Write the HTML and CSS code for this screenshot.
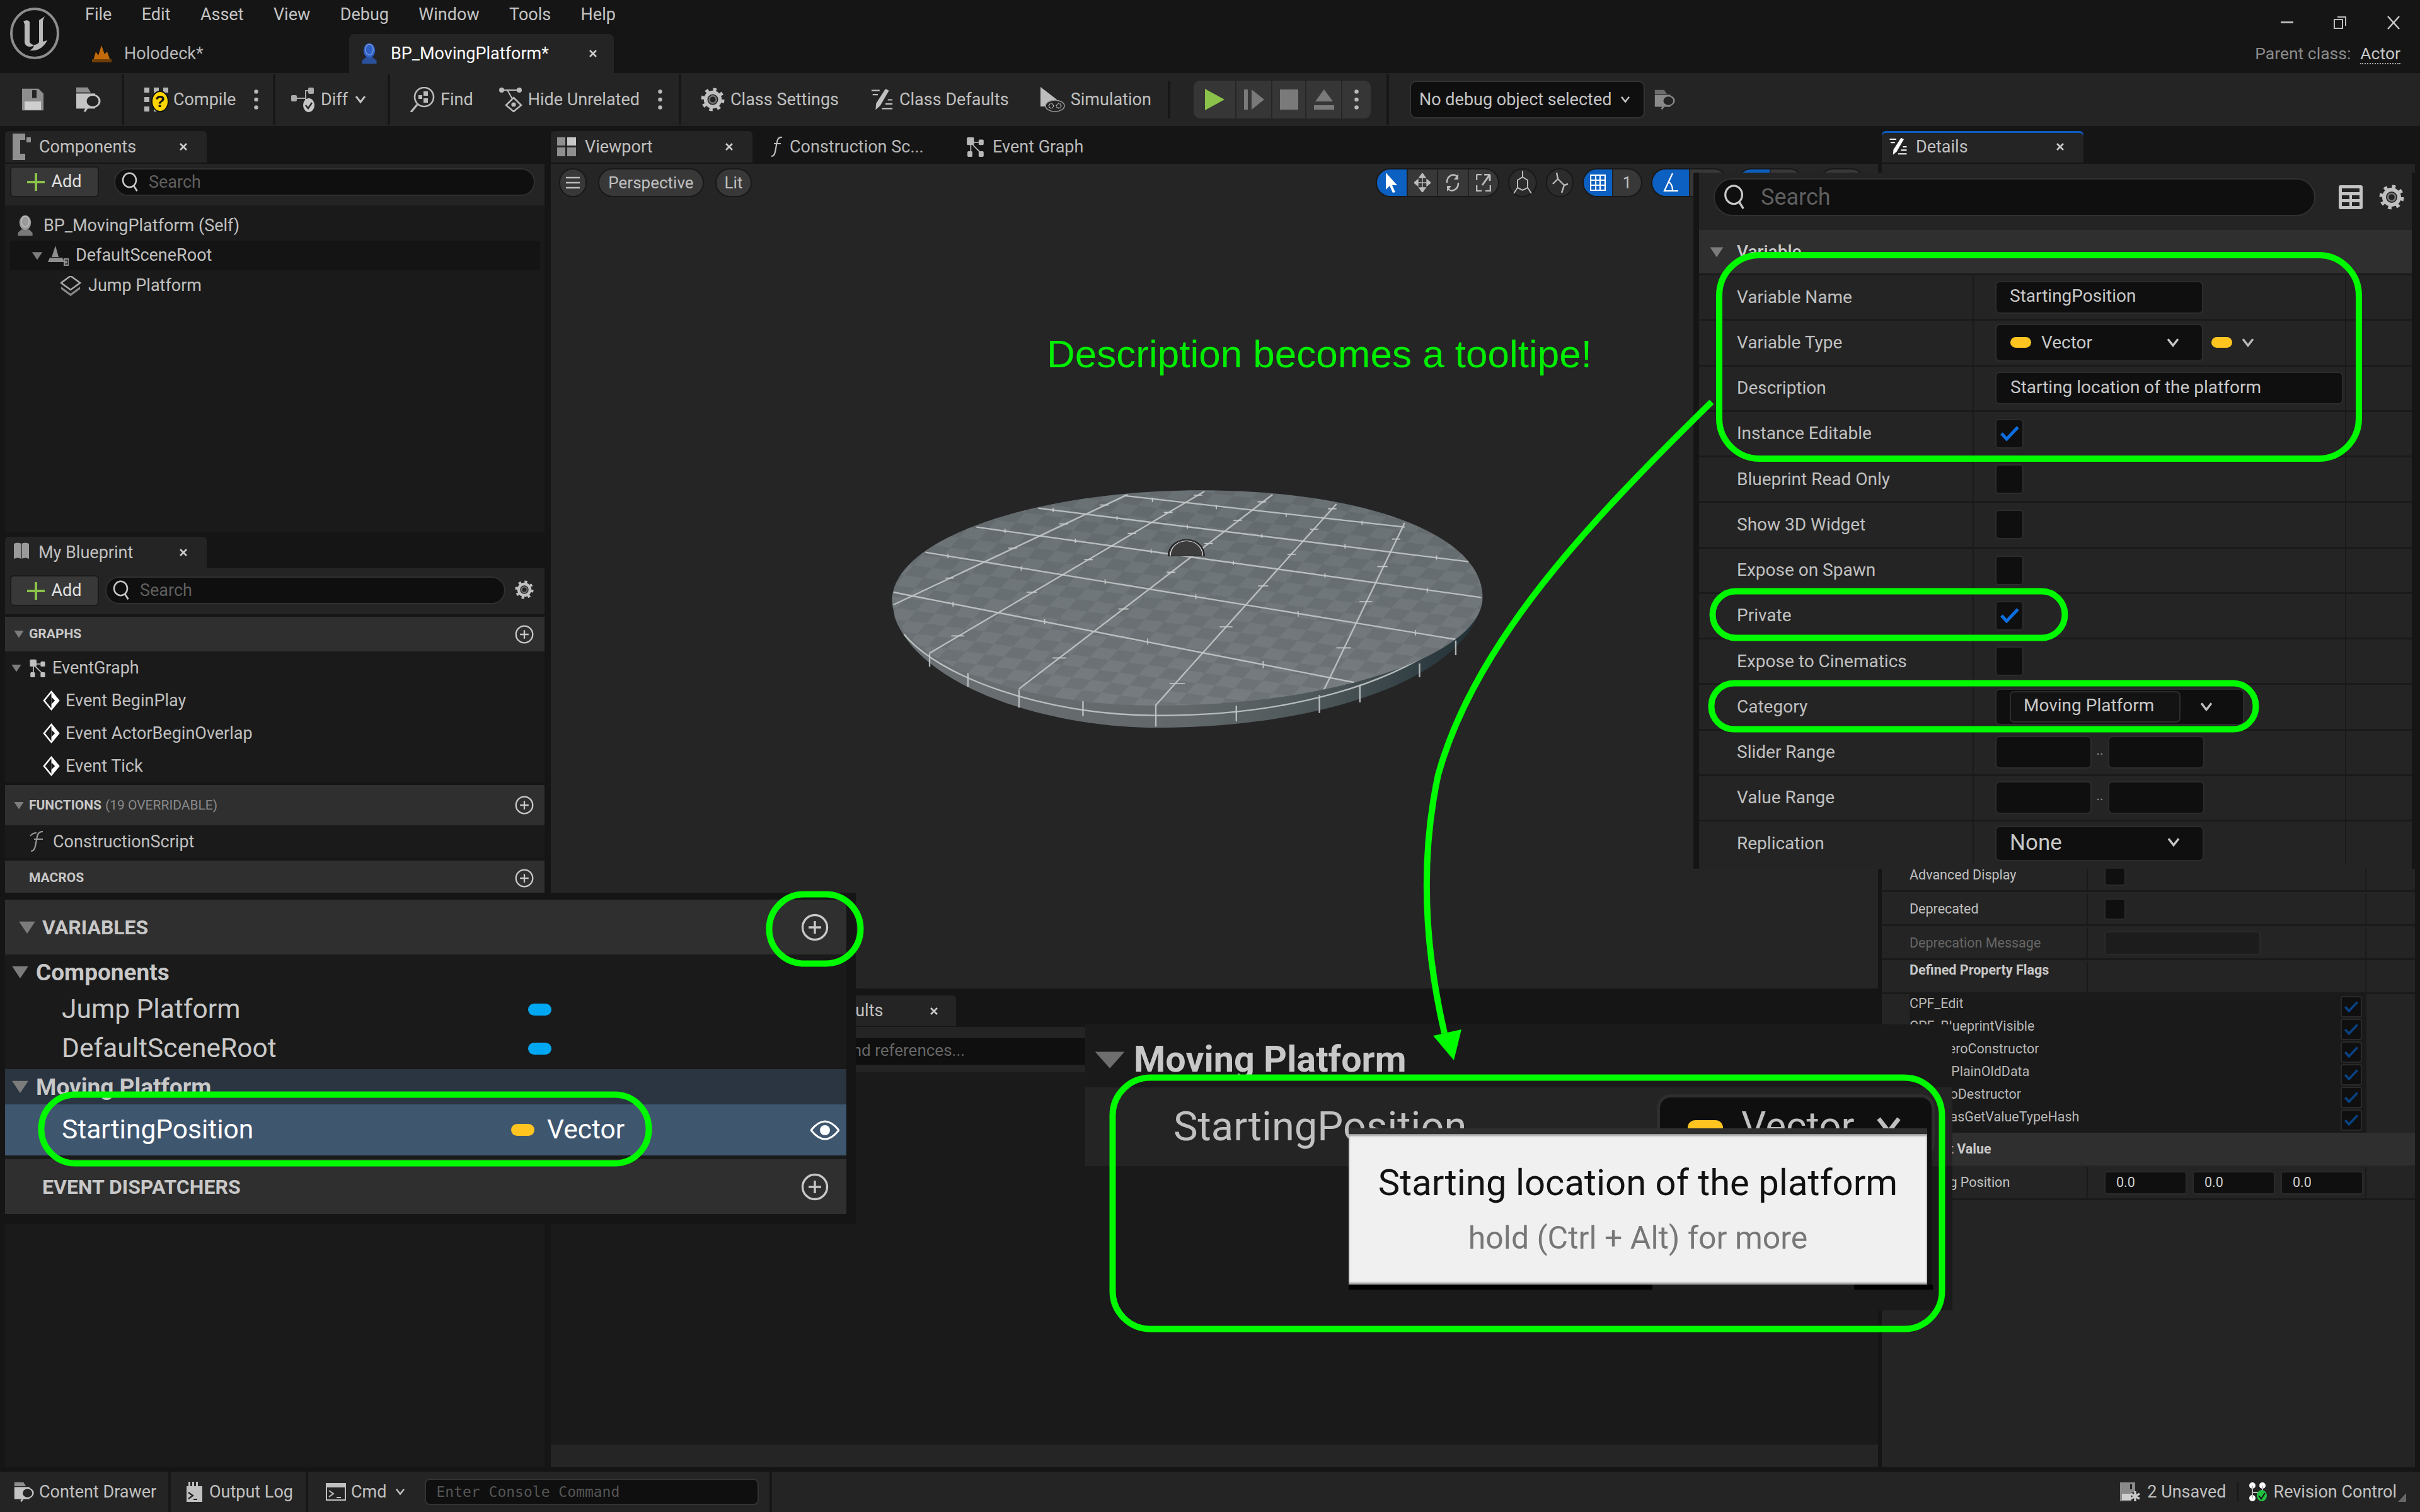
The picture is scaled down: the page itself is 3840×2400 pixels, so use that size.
FILE: index.html
```html
<!DOCTYPE html>
<html lang="en">
<head>
<meta charset="utf-8">
<title>BP_MovingPlatform</title>
<link rel="stylesheet" href="styles.css">
</head>
<body>
<svg class="defs" width="0" height="0" aria-hidden="true">
  <defs>
    <symbol id="x" viewBox="0 0 14 14"><path d="M2 2l10 10M12 2L2 12" fill="none" stroke="currentColor" stroke-width="2.6"/></symbol>
    <symbol id="chev" viewBox="0 0 20 14"><path d="M3 2l7 9 7-9" fill="none" stroke="currentColor" stroke-width="3"/></symbol>
    <symbol id="tri" viewBox="0 0 30 24"><path d="M1 2h28L15 23z" fill="currentColor"/></symbol>
    <symbol id="mag" viewBox="0 0 40 44"><ellipse cx="18" cy="18" rx="14" ry="15" fill="none" stroke="currentColor" stroke-width="3.4"/><path d="M27 30l7 11" stroke="currentColor" stroke-width="3.6"/></symbol>
    <symbol id="gear" viewBox="0 0 40 40"><circle cx="20" cy="20" r="12" fill="none" stroke="currentColor" stroke-width="6"/><circle cx="20" cy="20" r="16.5" fill="none" stroke="currentColor" stroke-width="6" stroke-dasharray="5.5 7.46"/><circle cx="20" cy="20" r="6" fill="none" stroke="#777" stroke-width="2.5"/></symbol>
    <symbol id="plusc" viewBox="0 0 44 44"><circle cx="22" cy="22" r="19.5" fill="none" stroke="currentColor" stroke-width="3.4"/><path d="M22 12v20M12 22h20" stroke="currentColor" stroke-width="3.4"/></symbol>
    <symbol id="check" viewBox="0 0 32 24"><path d="M3 12l8 9L29 2" fill="none" stroke="currentColor" stroke-width="5"/></symbol>
    <symbol id="kebab" viewBox="0 0 10 40"><circle cx="5" cy="6" r="3.6" fill="currentColor"/><circle cx="5" cy="20" r="3.6" fill="currentColor"/><circle cx="5" cy="34" r="3.6" fill="currentColor"/></symbol>
    <symbol id="event" viewBox="0 0 30 36"><path d="M15 1l14 17-14 17L1 18z" fill="#fff"/><path d="M15 5v26L4.5 18z" fill="#1a1a1a"/><path d="M15 12l6 6-6 6z" fill="#1a1a1a"/></symbol>
    <symbol id="graph" viewBox="0 0 32 36"><rect x="1" y="1" width="13" height="14" rx="2" fill="currentColor"/><rect x="22" y="5" width="9" height="10" rx="2" fill="currentColor"/><rect x="2" y="26" width="9" height="10" rx="2" fill="currentColor"/><rect x="22" y="26" width="9" height="10" rx="2" fill="currentColor"/><path d="M8 15v12M12 10h10M12 15l12 12" stroke="currentColor" stroke-width="2"/></symbol>
    <symbol id="pencil" viewBox="0 0 40 40"><path d="M26 1l6 3-15 26-8 7 1-11z" fill="currentColor"/><path d="M2 4h14M4 11h9M30 20h8M26 27h12M20 35h18" stroke="currentColor" stroke-width="2.4"/></symbol>
    <symbol id="bpicon" viewBox="0 0 34 44"><ellipse cx="17" cy="16" rx="12" ry="15" fill="currentColor"/><ellipse cx="17" cy="14" rx="8" ry="11" fill="none" stroke="#fff" stroke-opacity=".35" stroke-width="2"/><path d="M9 30h16l7 7v6H2v-6z" fill="currentColor" fill-opacity=".75"/></symbol>
    <symbol id="floppy" viewBox="0 0 36 46"><path d="M1 1h26l8 10v34H1z" fill="#8e8e8e"/><rect x="17" y="4" width="7" height="16" fill="#232323"/><rect x="5" y="27" width="26" height="17" fill="#cfcfcf"/></symbol>
    <symbol id="browse" viewBox="0 0 40 50"><path d="M1 1h18l5 10H1z" fill="#8e8e8e"/><path d="M1 13h30v30H1z" fill="#c4c4c4"/><ellipse cx="27" cy="28" rx="11" ry="12" fill="#242424" stroke="#c4c4c4" stroke-width="3"/><path d="M20 38l-6 11" stroke="#c4c4c4" stroke-width="3.4"/></symbol>
  </defs>
</svg>

<div class="app">
  <header class="titlebar">
    <svg class="logo" width="81" height="83" viewBox="0 0 81 83"><ellipse cx="40" cy="41" rx="37" ry="39" fill="#141414" stroke="#8d8d8d" stroke-width="4"/><path d="M22 22c5-3 9-2 10 1v32c4 6 12 5 15 0V20l9-6c-2 4-3 6-3 10v30l7-2c-5 10-14 18-28 16 4-2 6-4 7-8-7 4-14 2-15-5V27c-1-3-1-4-2-5z" fill="#b9b9b9"/></svg>
    <div class="title-main">
      <nav class="menu">
        <span>File</span><span>Edit</span><span>Asset</span><span>View</span><span>Debug</span><span>Window</span><span>Tools</span><span>Help</span>
      </nav>
      <div class="doc-tabs">
        <div class="doc-tab">
          <svg width="33" height="27" viewBox="0 0 33 27"><path d="M16 0l5 14 4-4 5 14H3l4-14 4 6z" fill="#c26a0a"/><rect x="1" y="22" width="31" height="5" fill="#6f3e06"/></svg>
          <span>Holodeck*</span>
        </div>
        <div class="doc-tab doc-tab-active">
          <svg class="ic-blue" width="32" height="34" viewBox="0 0 34 44"><use href="#bpicon"/></svg>
          <span>BP_MovingPlatform*</span>
          <svg class="close" width="14" height="14"><use href="#x"/></svg>
        </div>
      </div>
    </div>
    <div class="title-right">
      <div class="win-ctrl">
        <svg width="20" height="4" viewBox="0 0 20 4"><rect width="20" height="3" fill="#bbb"/></svg>
        <svg width="20" height="20" viewBox="0 0 20 20"><path d="M6 1h13v14M1 5h13v14H1z" fill="none" stroke="#bbb" stroke-width="2"/></svg>
        <svg width="22" height="22" viewBox="0 0 22 22"><path d="M2 1l18 20M20 1L2 21" stroke="#ccc" stroke-width="2.4"/></svg>
      </div>
      <div class="parent-class"><span class="pc-label">Parent class:</span> <span class="pc-value">Actor</span></div>
    </div>
  </header>

  <section class="toolbar">
    <div class="tsec tsec-1">
      <svg width="36" height="36" viewBox="0 0 36 46" preserveAspectRatio="none"><use href="#floppy"/></svg>
      <svg class="ml-50" width="40" height="40" viewBox="0 0 40 50" preserveAspectRatio="none"><use href="#browse"/></svg>
    </div>
    <div class="tsec tsec-2">
      <span class="tbtn tbtn-tight">
        <svg width="40" height="40" viewBox="0 0 40 40"><path d="M1 1h8v8H1zM16 1h8v8h-8zM1 16h8v8H1zM1 31h8v8H1zM16 31h8v8h-8zM31 1h8v8h-8z" fill="#b5b5b5"/><ellipse cx="26" cy="23" rx="13" ry="16" fill="#ffd500" stroke="#111" stroke-width="2"/><text x="26" y="32" class="ic-q">?</text></svg>
        Compile
      </span>
      <svg class="kebab" width="9" height="36" viewBox="0 0 10 40"><use href="#kebab"/></svg>
    </div>
    <div class="tsec tsec-3">
      <span class="tbtn">
        <svg width="39" height="40" viewBox="0 0 39 40"><rect x="1" y="13" width="9" height="10" rx="2" fill="#aaa"/><rect x="28" y="1" width="9" height="10" rx="2" fill="#aaa"/><path d="M10 18h14V6h4M24 18v8" fill="none" stroke="#aaa" stroke-width="2"/><ellipse cx="29" cy="29" rx="9" ry="11" fill="#c6c6c6"/><path d="M24 29l4 5 6-9" fill="none" stroke="#242424" stroke-width="2.4"/></svg>
        Diff
        <svg class="chev" width="20" height="14"><use href="#chev"/></svg>
      </span>
    </div>
    <div class="tsec tsec-4">
      <span class="tbtn">
        <svg width="40" height="40" viewBox="0 0 40 40"><ellipse cx="23" cy="16" rx="15" ry="15" fill="none" stroke="#bbb" stroke-width="2.6"/><path d="M12 28L2 40" stroke="#bbb" stroke-width="3.4"/><rect x="22" y="7" width="7" height="7" fill="#bbb"/><rect x="22" y="18" width="7" height="7" fill="#bbb"/><rect x="14" y="13" width="6" height="6" fill="#bbb"/></svg>
        Find
      </span>
      <span class="tbtn ml-40">
        <svg width="38" height="40" viewBox="0 0 38 40"><circle cx="5" cy="5" r="4" fill="#bbb"/><circle cx="33" cy="5" r="4" fill="#bbb"/><path d="M8 5h22M14 5l8 14" stroke="#bbb" stroke-width="2"/><path d="M24 17l12 12-12 10-12-10z" fill="none" stroke="#bbb" stroke-width="2.6"/><circle cx="24" cy="28" r="3.6" fill="#bbb"/></svg>
        Hide Unrelated
      </span>
      <svg class="kebab" width="9" height="36" viewBox="0 0 10 40"><use href="#kebab"/></svg>
    </div>
    <div class="tsec tsec-5">
      <span class="tbtn">
        <svg width="38" height="38" viewBox="0 0 40 40"><use href="#gear"/></svg>
        Class Settings
      </span>
      <span class="tbtn ml-50">
        <svg width="37" height="37" viewBox="0 0 40 40"><use href="#pencil"/></svg>
        Class Defaults
      </span>
      <span class="tbtn ml-49">
        <svg width="40" height="40" viewBox="0 0 40 40"><path d="M1 0l26 20-14 11H1z" fill="#bdbdbd"/><ellipse cx="24" cy="30" rx="15" ry="9" fill="#242424" stroke="#999" stroke-width="1.6"/><circle cx="18" cy="30" r="3.6" fill="none" stroke="#bbb" stroke-width="1.6" stroke-dasharray="1.6 1"/><circle cx="30" cy="30" r="3.6" fill="none" stroke="#bbb" stroke-width="1.6" stroke-dasharray="1.6 1"/></svg>
        Simulation
      </span>
      <i class="tsep"></i>
    </div>
    <div class="tsec tsec-6">
      <div class="play-group">
        <span class="play-cell"><svg width="32" height="34" viewBox="0 0 32 34"><path d="M1 0l31 17L1 34z" fill="#8bc34a"/></svg></span>
        <span class="play-cell"><svg width="32" height="32" viewBox="0 0 32 32"><path d="M0 0h6v32H0zM12 0l20 16-20 16z" fill="#7a7a7a"/></svg></span>
        <span class="play-cell play-stop"><svg width="29" height="32" viewBox="0 0 29 32"><rect width="29" height="32" fill="#7a7a7a"/></svg></span>
        <span class="play-cell"><svg width="32" height="32" viewBox="0 0 32 32"><path d="M16 0l14 19H2zM0 25h32v7H0z" fill="#7a7a7a"/></svg></span>
        <span class="play-cell play-kebab"><svg width="9" height="36" viewBox="0 0 10 40"><use href="#kebab"/></svg></span>
      </div>
    </div>
    <div class="tsec tsec-7">
      <div class="debug-select">
        <span>No debug object selected</span>
        <svg width="18" height="12"><use href="#chev"/></svg>
      </div>
      <svg class="folder-find" width="33" height="32" viewBox="0 0 40 50" preserveAspectRatio="none"><path d="M1 1h18l5 10H1z" fill="#6d6d6d"/><path d="M1 13h30v30H1z" fill="#8a8a8a"/><ellipse cx="27" cy="28" rx="11" ry="12" fill="#242424" stroke="#8a8a8a" stroke-width="3"/><path d="M20 38l-6 11" stroke="#8a8a8a" stroke-width="3.4"/></svg>
    </div>
  </section>

  <main class="workspace">
    <div class="col col-left">
      <div class="tabstrip">
        <div class="tab tab-left">
          <svg width="29" height="42" viewBox="0 0 29 42"><path d="M0 0h29v6H22v8h7V0zM0 0h20v10h-8v22h8v10H0z" fill="#8f8f8f"/></svg>
          <span>Components</span>
          <svg class="close" width="14" height="14"><use href="#x"/></svg>
        </div>
      </div>
      <div class="comp-toolbar">
        <div class="add-btn"><span class="plus"></span><span>Add</span></div>
        <div class="searchbox searchbox-comp">
          <svg width="30" height="34" viewBox="0 0 40 44"><use href="#mag"/></svg>
          <span>Search</span>
        </div>
      </div>
      <div class="tree">
        <div class="tree-row tree-bp">
          <svg width="32" height="34" viewBox="0 0 34 44" class="ic-dim"><use href="#bpicon"/></svg>
          <span>BP_MovingPlatform (Self)</span>
        </div>
        <div class="tree-row tree-root">
          <svg class="ic-tri" width="20" height="14"><use href="#tri"/></svg>
          <svg width="33" height="32" viewBox="0 0 33 32"><path d="M12 0l5 18H6zM3 19h20l3 7H0zM25 20h8v12h-8z" fill="#8e8e8e"/><path d="M27 23h4v6h-4" fill="none" stroke="#222" stroke-width="1.4"/></svg>
          <span>DefaultSceneRoot</span>
        </div>
        <div class="tree-row tree-leaf">
          <svg width="33" height="32" viewBox="0 0 33 32"><path d="M16 0l15 11-15 11L1 11z" fill="none" stroke="#aaa" stroke-width="2.6"/><path d="M1 17l15 11 15-11v4L16 32 1 21z" fill="#888"/></svg>
          <span>Jump Platform</span>
        </div>
      </div>
      <div class="strip-gap"></div>
      <div class="tab tab-left">
        <svg width="28" height="32" viewBox="0 0 28 32"><path d="M2 2c4-2 8-2 12 0 4-2 8-2 12 0v24c-4-2-8-2-12 0-4-2-8-2-12 0z" fill="#9a9a9a"/><path d="M14 2v24" stroke="#333" stroke-width="1.5"/></svg>
        <span>My Blueprint</span>
        <svg class="close" width="14" height="14"><use href="#x"/></svg>
      </div>
      <div class="bp-toolbar">
        <div class="add-btn"><span class="plus"></span><span>Add</span></div>
        <div class="searchbox searchbox-bp">
          <svg width="30" height="34" viewBox="0 0 40 44"><use href="#mag"/></svg>
          <span>Search</span>
        </div>
        <svg class="bp-gear" width="30" height="30" viewBox="0 0 40 40"><use href="#gear"/></svg>
      </div>
      <div class="sec-head sec-graphs">
        <svg class="ic-tri-h" width="20" height="13"><use href="#tri"/></svg>
        <b>GRAPHS</b>
        <svg class="plusc" width="30" height="30" viewBox="0 0 44 44"><use href="#plusc"/></svg>
      </div>
      <div class="sec-body">
        <div class="list-row list-parent">
          <svg class="ic-tri" width="20" height="13"><use href="#tri"/></svg>
          <svg width="29" height="29" viewBox="0 0 32 36"><use href="#graph"/></svg>
          <span>EventGraph</span>
        </div>
        <div class="list-row list-child"><svg width="29" height="34" viewBox="0 0 30 36"><use href="#event"/></svg><span>Event BeginPlay</span></div>
        <div class="list-row list-child"><svg width="29" height="34" viewBox="0 0 30 36"><use href="#event"/></svg><span>Event ActorBeginOverlap</span></div>
        <div class="list-row list-child"><svg width="29" height="34" viewBox="0 0 30 36"><use href="#event"/></svg><span>Event Tick</span></div>
      </div>
      <div class="sec-head sec-functions">
        <svg class="ic-tri-h" width="20" height="13"><use href="#tri"/></svg>
        <b>FUNCTIONS</b><span class="sec-note">(19 OVERRIDABLE)</span>
        <svg class="plusc" width="30" height="30" viewBox="0 0 44 44"><use href="#plusc"/></svg>
      </div>
      <div class="sec-body sec-body-fn">
        <div class="list-row list-fn">
          <svg width="30" height="34" viewBox="0 0 30 34"><path d="M22 1c-5 0-8 2-9 8l-3 15c-1 5-3 8-7 8" fill="none" stroke="#999" stroke-width="2.2"/><path d="M8 13h14M2 8C5 4 8 3 12 3" fill="none" stroke="#999" stroke-width="1.8"/></svg>
          <span>ConstructionScript</span>
        </div>
      </div>
      <div class="sec-head sec-macros">
        <b>MACROS</b>
        <svg class="plusc" width="30" height="30" viewBox="0 0 44 44"><use href="#plusc"/></svg>
      </div>
      <div class="sec-rest"></div>
    </div>

    <div class="col col-mid">
      <div class="tabstrip tabstrip-vp">
        <div class="tab tab-vp">
          <svg width="30" height="30" viewBox="0 0 30 30"><rect width="13" height="13" fill="#8f8f8f"/><rect x="16" width="14" height="13" fill="#c8c8c8"/><rect y="16" width="13" height="14" fill="#8f8f8f"/><rect x="16" y="16" width="14" height="14" fill="#8f8f8f"/></svg>
          <span>Viewport</span>
          <svg class="close" width="14" height="14"><use href="#x"/></svg>
        </div>
        <div class="plain-tab plain-cs"><svg width="20" height="34" viewBox="0 0 20 34"><path d="M18 2c-5-1-7 2-8 7L7 25c-1 5-3 7-6 7M5 12h11" fill="none" stroke="#bbb" stroke-width="2.2"/></svg><span>Construction Sc...</span></div>
        <div class="plain-tab plain-eg"><svg width="29" height="32" viewBox="0 0 32 36"><use href="#graph"/></svg><span>Event Graph</span></div>
      </div>
      <div class="viewport">
        <div class="vp-toolbar">
          <div class="pill pill-menu"><svg width="22" height="20" viewBox="0 0 22 20"><path d="M0 2h22M0 10h22M0 18h22" stroke="#bdbdbd" stroke-width="2.6"/></svg></div>
          <div class="pill pill-persp">Perspective</div>
          <div class="pill pill-lit">Lit</div>
          <div class="vp-right">
            <div class="pill-group pg-mode">
              <span class="pg-cell pg-on"><svg width="22" height="32" viewBox="0 0 22 32"><path d="M2 0l18 20h-8l5 11-4 1-5-11-6 6z" fill="#fff"/></svg></span>
              <span class="pg-cell"><svg width="26" height="30" viewBox="0 0 26 30"><path d="M13 0l5 7H8zM13 30l-5-7h10zM0 15l6-5v10zM26 15l-6-5v10zM13 7v16M6 15h14" fill="#bbb" stroke="#bbb" stroke-width="1.4"/></svg></span>
              <span class="pg-cell"><svg width="26" height="30" viewBox="0 0 26 30"><path d="M4 15a10 12 0 0 1 17-9M22 15a10 12 0 0 1-17 9" fill="none" stroke="#bbb" stroke-width="2.6"/><path d="M22 1v9h-7zM4 29v-9h7z" fill="#bbb"/></svg></span>
              <span class="pg-cell"><svg width="24" height="28" viewBox="0 0 24 28"><path d="M1 1h8M1 1v9M1 18v9h8M23 18v9h-8" fill="none" stroke="#bbb" stroke-width="2.6"/><path d="M22 1v10M22 1h-9M22 1L10 18" fill="none" stroke="#bbb" stroke-width="3"/></svg></span>
            </div>
            <div class="pill pill-ico"><svg width="30" height="38" viewBox="0 0 30 38"><path d="M15 0v10M15 10l8 5v12l-8 4-8-4V15zM7 27L1 36M23 27l6 9" fill="none" stroke="#bbb" stroke-width="2"/></svg></div>
            <div class="pill pill-ico pill-ico2"><svg width="28" height="36" viewBox="0 0 28 36"><path d="M9 2l2 10 10 10-4 12M11 12L3 20M21 22l6-2" fill="none" stroke="#bbb" stroke-width="2.4"/></svg></div>
            <div class="pill-group pg-grid">
              <span class="pg-cell pg-on"><svg width="25" height="26" viewBox="0 0 25 26"><path d="M1 1h23v24H1zM9 1v24M16 1v24M1 9h23M1 17h23" fill="none" stroke="#fff" stroke-width="2.2"/></svg></span>
              <span class="pg-cell">1</span>
            </div>
            <div class="pill-group pg-angle">
              <span class="pg-cell pg-on"><svg width="26" height="30" viewBox="0 0 26 30"><path d="M16 0L3 28h22M10 14c4 2 6 8 6 14" fill="none" stroke="#fff" stroke-width="2.2"/></svg></span>
              <span class="pg-cell">10</span>
            </div>
            <div class="pill-group pg-scale"><span class="pg-cell pg-on"></span><span class="pg-cell"></span></div>
            <div class="pill-group pg-cam"><span class="pg-cell"></span></div>
          </div>
        </div>
        <div class="annot-label">Description becomes a tooltipe!</div>
        <svg class="platform" width="1060" height="440" viewBox="0 0 1568 1320" preserveAspectRatio="none">
          <defs>
            <pattern id="chk" width="2" height="2" patternUnits="userSpaceOnUse" patternTransform="matrix(45 12.5 21 -48 0 0)">
              <rect width="1" height="1" fill="#000" fill-opacity=".07"/><rect x="1" y="1" width="1" height="1" fill="#000" fill-opacity=".07"/>
            </pattern>
            <linearGradient id="faceg" x1="0" y1="0" x2="0" y2="1"><stop offset="0" stop-color="#6a7175"/><stop offset="1" stop-color="#767c80"/></linearGradient>
            <linearGradient id="sideg" x1="0" y1="0" x2="1" y2="0"><stop offset="0" stop-color="#6a7073"/><stop offset=".5" stop-color="#62686a"/><stop offset=".75" stop-color="#495356"/><stop offset="1" stop-color="#1f2f35"/></linearGradient>
            <clipPath id="faceclip"><path d="M97 625C110 330 450 115 820 115C1200 115 1483 320 1483 625C1483 900 1130 1140 720 1140C370 1140 90 900 97 625Z"/></clipPath>
          </defs>
          <path d="M97 625L103 720C165 1060 470 1245 720 1245C1080 1245 1400 1040 1470 720L1483 625Z" fill="url(#sideg)"/>
          <g class="pf-lines">
            <path d="M125 800C205 1000 450 1185 715 1187C1000 1190 1300 1060 1465 720"/>
            <path d="M185 890v65M275 980v70M395 1060v90M545 1110v80M716 1140v100M905 1140v75M1100 1090v85M1195 1040v85M1335 940v65M1420 830v70"/>
          </g>
          <path d="M97 625C110 330 450 115 820 115C1200 115 1483 320 1483 625C1483 900 1130 1140 720 1140C370 1140 90 900 97 625Z" fill="url(#faceg)"/>
          <path d="M97 625C110 330 450 115 820 115C1200 115 1483 320 1483 625C1483 900 1130 1140 720 1140C370 1140 90 900 97 625Z" fill="url(#chk)"/>
          <g class="pf-lines" clip-path="url(#faceclip)">
            <path d="M640 140L1300 290M440 200L1450 455M295 290L1480 625M175 410L1420 825M100 600L1195 1035"/>
            <path d="M100 660L650 135M185 890L830 120M395 1060L990 135M715 1140L1140 180M1100 1110L1300 270"/>
          </g>
          <path class="pf-ticks" d="M708 150v20M858 185v20M1022 222v20M1200 260v20M475 198v20M625 238v20M790 278v20M965 322v20M1160 372v20M1375 425v20M362 298v20M527 345v20M705 395v20M898 450v20M1113 510v20M1353 578v24M228 418v20M400 477v20M597 538v24M810 610v24M1050 690v26M1325 780v26M240 645v24M455 728v24M697 820v30M968 928v34M585 185h20M490 275h20M370 390h20M222 533h20M805 138h20M735 220h20M650 320h20M548 445h20M413 600h24M236 808h30M955 170h20M898 258h20M830 368h20M742 505h20M628 680h24M474 913h32M1120 203h20M1078 300h20M1025 420h20M956 570h24M866 765h30M748 1035h36M1270 347h20M1236 478h24M1194 645h30M1140 865h34"/>
          <path d="M745 428C745 380 765 348 788 348C812 348 830 380 830 428Z" fill="#3c3c3c" stroke="#111" stroke-width="2"/>
          <path d="M750 426C750 385 768 356 788 356C808 356 826 385 826 426" fill="none" stroke="#e8e8e8" stroke-width="2"/>
        </svg>
      </div>
      <div class="tabstrip tabstrip-find">
        <div class="tab tab-find">
          <span>Find Results</span>
          <svg class="close" width="14" height="14"><use href="#x"/></svg>
        </div>
      </div>
      <div class="find-bar"><div class="find-input">Find references...</div></div>
      <div class="find-list"></div>
      <div class="find-foot"></div>
    </div>

    <div class="col col-right">
      <div class="tabstrip">
        <div class="tab tab-details">
          <svg width="30" height="30" viewBox="0 0 40 40" class="ic-white"><use href="#pencil"/></svg>
          <span>Details</span>
          <svg class="close" width="14" height="14"><use href="#x"/></svg>
        </div>
      </div>
      <div class="det-hidden"></div>
      <div class="drow">
        <span class="dlabel">Advanced Display</span>
        <span class="dval"><i class="sbox"></i></span><span></span>
      </div>
      <div class="drow">
        <span class="dlabel">Deprecated</span>
        <span class="dval"><i class="sbox"></i></span><span></span>
      </div>
      <div class="drow">
        <span class="dlabel dlabel-off">Deprecation Message</span>
        <span class="dval"><i class="sinput-off"></i></span><span></span>
      </div>
      <div class="drow drow-title">
        <b class="dlabel">Defined Property Flags</b><span class="dval"></span><span></span>
      </div>
      <div class="flags">
        <div class="flags-list">
          <div class="flag"><span>CPF_Edit</span><i class="sbox"><svg width="24" height="18" viewBox="0 0 32 24"><use href="#check"/></svg></i></div>
          <div class="flag"><span>CPF_BlueprintVisible</span><i class="sbox"><svg width="24" height="18" viewBox="0 0 32 24"><use href="#check"/></svg></i></div>
          <div class="flag"><span>CPF_ZeroConstructor</span><i class="sbox"><svg width="24" height="18" viewBox="0 0 32 24"><use href="#check"/></svg></i></div>
          <div class="flag"><span>CPF_IsPlainOldData</span><i class="sbox"><svg width="24" height="18" viewBox="0 0 32 24"><use href="#check"/></svg></i></div>
          <div class="flag"><span>CPF_NoDestructor</span><i class="sbox"><svg width="24" height="18" viewBox="0 0 32 24"><use href="#check"/></svg></i></div>
          <div class="flag"><span>CPF_HasGetValueTypeHash</span><i class="sbox"><svg width="24" height="18" viewBox="0 0 32 24"><use href="#check"/></svg></i></div>
        </div>
      </div>
      <div class="dhead"><b>Default Value</b></div>
      <div class="drow drow-vec">
        <span class="dlabel">Starting Position</span>
        <span class="dval dval-vec"><i class="vecin">0.0</i><i class="vecin">0.0</i><i class="vecin">0.0</i></span><span></span>
      </div>
    </div>
  </main>

  <footer class="statusbar">
    <div class="st st-drawer">
      <svg width="32" height="32" viewBox="0 0 40 50" preserveAspectRatio="none"><use href="#browse"/></svg>
      <span>Content Drawer</span>
    </div>
    <div class="st st-log">
      <svg width="25" height="32" viewBox="0 0 25 32"><path d="M0 7h3V0h3v7h3V0h3v7h3V0h3v7h7v25H0z" fill="#c0c0c0"/><path d="M3 17l7 5-7 5M11 28h6" fill="none" stroke="#222" stroke-width="2.2"/></svg>
      <span>Output Log</span>
    </div>
    <div class="st st-cmd">
      <svg width="32" height="28" viewBox="0 0 32 28"><rect width="32" height="28" fill="#c0c0c0"/><rect x="2" y="7" width="28" height="19" fill="#242424"/><path d="M5 12l7 5-7 5M17 23h7" fill="none" stroke="#c0c0c0" stroke-width="2"/></svg>
      <span>Cmd</span>
      <svg width="18" height="12"><use href="#chev"/></svg>
      <div class="console">Enter Console Command</div>
    </div>
    <div class="st st-right">
      <span class="st-item">
        <svg width="32" height="30" viewBox="0 0 32 30"><path d="M0 0h24v16h-6v14H0z" fill="#8a8a8a"/><rect x="3" y="18" width="14" height="10" fill="#cfcfcf"/><rect x="16" y="3" width="3" height="8" fill="#222"/><path d="M24 14v16M17 18l14 8M31 18l-14 8" stroke="#c8c8c8" stroke-width="3.4"/></svg>
        2 Unsaved
      </span>
      <i class="st-sep"></i>
      <span class="st-item">
        <svg width="28" height="30" viewBox="0 0 28 30"><circle cx="5" cy="5" r="5" fill="#fff"/><circle cx="21" cy="5" r="5" fill="#fff"/><circle cx="5" cy="25" r="5" fill="#fff"/><path d="M5 5v20M5 16h10M21 5v8" stroke="#bbb" stroke-width="2"/><ellipse cx="20" cy="21" rx="8" ry="9" fill="#20c040"/><path d="M15 21l4 5 6-9" fill="none" stroke="#111" stroke-width="2"/></svg>
        Revision Control
      </span>
      <svg class="st-corner" width="13" height="14" viewBox="0 0 13 14"><path d="M13 0v14H0z" fill="#666"/></svg>
    </div>
  </footer>
</div>

<!-- pasted callout: Details panel, enlarged -->
<section class="ov-details">
  <div class="ovd-main">
    <div class="ovd-search">
      <div class="searchbox searchbox-det">
        <svg width="42" height="42" viewBox="0 0 40 44"><use href="#mag"/></svg>
        <span>Search</span>
      </div>
      <svg class="ovd-table" width="38" height="38" viewBox="0 0 38 38"><rect width="38" height="38" rx="3" fill="#c4c4c4"/><path d="M5 5h28v6H5zM5 16h12v6H5zM21 16h12v6H21zM5 27h12v6H5zM21 27h12v6H21z" fill="#242424"/></svg>
      <svg class="ovd-gear" width="40" height="40" viewBox="0 0 40 40"><use href="#gear"/></svg>
    </div>
    <div class="ovd-head"><svg width="26" height="18" viewBox="0 0 30 24" class="ic-tri-h"><use href="#tri"/></svg><b>Variable</b></div>
    <div class="prow"><span>Variable Name</span><span class="pval"><i class="pinput pinput-m">StartingPosition</i></span><span></span></div>
    <div class="prow"><span>Variable Type</span><span class="pval">
      <i class="pinput pinput-m pinput-type"><em class="pin pin-y"></em>Vector<svg class="chev-r" width="24" height="16" viewBox="0 0 20 14"><use href="#chev"/></svg></i>
      <em class="pin pin-y pin-after"></em><svg class="chev-after" width="24" height="16" viewBox="0 0 20 14"><use href="#chev"/></svg>
    </span><span></span></div>
    <div class="prow"><span>Description</span><span class="pval"><i class="pinput pinput-l">Starting location of the platform</i></span><span></span></div>
    <div class="prow"><span>Instance Editable</span><span class="pval"><i class="cbox"><svg width="32" height="24" viewBox="0 0 32 24"><use href="#check"/></svg></i></span><span></span></div>
    <div class="prow"><span>Blueprint Read Only</span><span class="pval"><i class="cbox"></i></span><span></span></div>
    <div class="prow"><span>Show 3D Widget</span><span class="pval"><i class="cbox"></i></span><span></span></div>
    <div class="prow"><span>Expose on Spawn</span><span class="pval"><i class="cbox"></i></span><span></span></div>
    <div class="prow"><span>Private</span><span class="pval"><i class="cbox"><svg width="32" height="24" viewBox="0 0 32 24"><use href="#check"/></svg></i></span><span></span></div>
    <div class="prow"><span>Expose to Cinematics</span><span class="pval"><i class="cbox"></i></span><span></span></div>
    <div class="prow"><span>Category</span><span class="pval"><i class="combo"><i class="combo-in">Moving Platform</i><svg width="24" height="16" viewBox="0 0 20 14"><use href="#chev"/></svg></i></span><span></span></div>
    <div class="prow"><span>Slider Range</span><span class="pval"><i class="pinput pinput-s"></i><em class="dots">..</em><i class="pinput pinput-s"></i></span><span></span></div>
    <div class="prow"><span>Value Range</span><span class="pval"><i class="pinput pinput-s"></i><em class="dots">..</em><i class="pinput pinput-s"></i></span><span></span></div>
    <div class="prow"><span>Replication</span><span class="pval"><i class="pinput pinput-none">None<svg class="chev-r" width="24" height="16" viewBox="0 0 20 14"><use href="#chev"/></svg></i></span><span></span></div>
  </div>
</section>

<!-- pasted callout: My Blueprint variables, enlarged -->
<section class="ov-bp">
  <div class="ovb-head ovb-head-var">
    <svg class="ovb-tri-h" width="32" height="22" viewBox="0 0 30 24"><use href="#tri"/></svg>
    <b>VARIABLES</b>
    <svg class="ovb-plus" width="44" height="44" viewBox="0 0 44 44"><use href="#plusc"/></svg>
  </div>
  <div class="ovb-group">
    <div class="ovb-cat"><svg width="32" height="22" viewBox="0 0 30 24"><use href="#tri"/></svg><b>Components</b></div>
    <div class="ovb-var"><span class="ovb-name">Jump Platform</span><em class="vpin vpin-b"></em></div>
    <div class="ovb-var"><span class="ovb-name">DefaultSceneRoot</span><em class="vpin vpin-b"></em></div>
  </div>
  <div class="ovb-cat ovb-cat-sel"><svg width="32" height="22" viewBox="0 0 30 24"><use href="#tri"/></svg><b>Moving Platform</b></div>
  <div class="ovb-var ovb-var-sel">
    <span class="ovb-name">StartingPosition</span><em class="vpin vpin-y"></em><span class="ovb-type">Vector</span>
    <svg class="ovb-eye" width="46" height="32" viewBox="0 0 46 32"><path d="M1 16C9 6 16 2 23 2s14 4 22 14c-8 10-15 14-22 14S9 26 1 16z" fill="none" stroke="#fff" stroke-width="3"/><circle cx="23" cy="16" r="8" fill="#fff"/></svg>
  </div>
  <div class="ovb-gap"></div>
  <div class="ovb-head">
    <b>EVENT DISPATCHERS</b>
    <svg class="ovb-plus" width="44" height="44" viewBox="0 0 44 44"><use href="#plusc"/></svg>
  </div>
</section>

<!-- pasted callout: tooltip, enlarged -->
<section class="ov-tip">
  <div class="ovt-head"><svg width="50" height="30" viewBox="0 0 30 24" preserveAspectRatio="none"><use href="#tri" width="30" height="24"/></svg><b>Moving Platform</b></div>
  <div class="ovt-row">
    <span class="ovt-name">StartingPosition</span>
    <div class="ovt-type"><em class="ovt-pin"></em><span>Vector</span><svg width="50" height="32" viewBox="0 0 20 14"><use href="#chev"/></svg></div>
  </div>
  <div class="tooltip">
    <div class="tooltip-main">Starting location of the platform</div>
    <div class="tooltip-sub">hold (Ctrl + Alt) for more</div>
  </div>
</section>

<svg class="annot" width="3840" height="2400" viewBox="0 0 3840 2400">
  <rect x="2728" y="405" width="1015" height="323" rx="64"/>
  <rect x="2717.5" y="938.5" width="559" height="74" rx="37"/>
  <rect x="2715.5" y="1084.5" width="864" height="73" rx="36"/>
  <rect x="1220.5" y="1419.5" width="145" height="110" rx="55"/>
  <rect x="65.5" y="1737.5" width="964" height="109" rx="54"/>
  <rect x="1765.5" y="1710.5" width="1316" height="399" rx="60"/>
  <path d="M2716 638C2520 830 2340 1020 2282 1230C2252 1370 2262 1510 2292 1640"/>
  <polygon class="annot-head" points="2274,1644 2319,1634 2307,1683"/>
</svg>
</body>
</html>
```

FILE: styles.css
```css
* { box-sizing: border-box; }
html, body { margin: 0; padding: 0; }
body {
  position: relative;
  width: 3840px;
  height: 2400px;
  overflow: hidden;
  background: #151515;
  color: #c0c0c0;
  font-family: Roboto, "Liberation Sans", sans-serif;
  font-size: 27px;
  line-height: 1;
}
i, em { font-style: normal; }
svg { display: block; flex: none; }
.defs { position: absolute; }
.app { display: flex; flex-direction: column; width: 3840px; height: 2400px; }

/* title bar */
.titlebar { display: flex; height: 116px; flex: none; background: #151515; }
.logo { margin: 12px 0 0 15px; }
.title-main { margin-left: 39px; display: flex; flex-direction: column; }
.menu { display: flex; gap: 47.4px; height: 46px; align-items: center; color: #c4c4c4; }
.doc-tabs { display: flex; height: 62px; margin-top: 8px; }
.doc-tab { display: flex; align-items: center; width: 419px; padding: 0 0 0 10px; gap: 19px; color: #b8b8b8; }
.doc-tab-active { width: 420px; padding: 0 26px 0 16px; gap: 18px; background: #242424; border-radius: 8px 8px 0 0; color: #fff; }
.doc-tab-active .close { margin-left: auto; color: #ccc; }
.ic-blue { color: #2d5fc4; }
.ic-dim { color: #9a9a9a; }
.ic-white { color: #fff; }
.title-right { margin-left: auto; padding-right: 31px; display: flex; flex-direction: column; align-items: flex-end; }
.win-ctrl { display: flex; gap: 64px; height: 72px; align-items: center; }
.parent-class { display: flex; gap: 15px; font-size: 26.5px; }
.pc-label { color: #8a8a8a; }
.pc-value { color: #c8c8c8; border-bottom: 2px dotted #aaa; padding-bottom: 1px; }

/* toolbar */
.toolbar { display: flex; height: 84px; flex: none; background: #242424; }
.tsec { display: flex; align-items: center; position: relative; height: 80px; margin-top: 2px; border-right: 4px solid #171717; }
.tsec-1 { width: 197px; padding-left: 34px; }
.tsec-2 { width: 240px; padding-left: 31px; }
.tsec-3 { width: 182px; padding-left: 24px; }
.tsec-4 { width: 462px; padding-left: 31px; }
.tsec-5 { width: 776px; padding-left: 31px; border-right: 0; }
.tsec-6 { width: 347px; padding-left: 37px; border-right: 4px solid #171717; }
.tsec-7 { flex: 1; padding-left: 33px; border-right: 0; }
.tbtn { display: flex; align-items: center; gap: 9px; color: #c0c0c0; }
.tbtn-tight { gap: 7px; }
.tbtn .chev { margin-left: 1px; }
.ml-50 { margin-left: 50px; }
.ml-49 { margin-left: 49px; }
.ml-40 { margin-left: 40px; }
.kebab { margin-left: 28px; color: #b8b8b8; }
.tsep { width: 4px; height: 60px; margin-left: auto; background: #171717; }
.ic-q { font: bold 26px "Liberation Sans", sans-serif; fill: #111; text-anchor: middle; }
.play-group { display: flex; width: 281px; height: 60px; background: #363636; border-radius: 10px; overflow: hidden; }
.play-cell { display: flex; align-items: center; justify-content: center; width: 57px; border-right: 2px solid #262626; }
.play-cell:first-child { width: 68px; }
.play-stop { width: 54px; }
.play-kebab { width: 45px; border-right: 0; color: #b8b8b8; }
.debug-select { display: flex; align-items: center; gap: 13px; width: 373px; height: 60px; padding-left: 13px; background: #0f0f0f; border: 2px solid #333; border-radius: 10px; color: #c4c4c4; }
.folder-find { margin-left: 15px; }

/* workspace */
.workspace { display: grid; grid-template-columns: 856px 2106px 846px; column-gap: 0; height: 2136px; flex: none; padding: 0 8px 7px; background: #151515; }
.col { display: flex; flex-direction: column; min-width: 0; height: 2129px; }
.col-mid { margin-left: 10px; width: 2106px; }
.col-right { margin-left: 16px; width: 846px; background: #242424; }
.tabstrip { display: flex; height: 60px; flex: none; padding-top: 8px; background: #151515; }
.tab { display: flex; align-items: center; flex: none; width: 320px; height: 50px; gap: 13px; padding-left: 12px; background: #242424; border-radius: 6px 6px 0 0; color: #c0c0c0; }
.tab .close { margin-left: auto; margin-right: 30px; color: #ccc; }
.tab-vp { padding-left: 10px; gap: 14px; }
.tab-details { box-shadow: inset 0 3px 0 #0d5cc0; gap: 13px; padding-left: 11px; }
.plain-tab { display: flex; align-items: center; height: 50px; gap: 13px; color: #b8b8b8; }
.plain-cs { margin-left: 29px; width: 310px; gap: 10px; }
.comp-toolbar { display: flex; height: 66px; flex: none; padding: 4px 8px 0; gap: 24px; background: #242424; }
.add-btn { display: flex; align-items: center; justify-content: center; gap: 10px; width: 141px; height: 49px; background: #383838; border: 2px solid #1a1a1a; border-radius: 6px; color: #e0e0e0; }
.plus { position: relative; width: 28px; height: 28px; }
.plus::before, .plus::after { content: ""; position: absolute; background: #8bc34a; }
.plus::before { left: 12px; top: 0; width: 4px; height: 28px; }
.plus::after { left: 0; top: 12px; width: 28px; height: 4px; }
.searchbox { display: flex; align-items: center; gap: 14px; height: 44px; padding-left: 9px; background: #0f0f0f; border: 2px solid #303030; border-radius: 24px; color: #5f5f5f; }
.searchbox svg { color: #c8c8c8; }
.searchbox-comp { width: 668px; margin-top: 3px; }
.searchbox-bp { width: 635px; margin-top: 2px; }
.bp-gear { margin: 8px 0 0 5px; }
.tree { height: 519px; flex: none; padding-top: 8px; background: #1a1a1a; }
.tree-row { display: flex; align-items: center; color: #c0c0c0; }
.tree-bp { height: 48px; padding-left: 16px; gap: 13px; }
.tree-root { height: 47px; margin: 0 7px 0 8px; padding-left: 33px; background: #141414; gap: 7px; }
.tree-root span { margin-left: 4px; }
.tree-leaf { height: 49px; padding-left: 88px; gap: 11px; }
.ic-tri { color: #7c7c7c; }
.ic-tri-h { color: #7c7c7c; }
.strip-gap { height: 7px; flex: none; background: #151515; }
.bp-toolbar { display: flex; height: 77px; flex: none; padding: 11px 8px 0; gap: 10px; background: #242424; border-bottom: 4px solid #151515; }
.sec-head { display: flex; align-items: center; flex: none; background: #2f2f2f; padding-left: 12px; font-size: 21px; color: #c8c8c8; }
.sec-head b { margin-left: 6px; font-weight: 700; }
.sec-note { margin-left: 6px; color: #8a8a8a; }
.sec-graphs { height: 55px; }
.sec-functions { height: 64px; }
.sec-macros { height: 55px; }
.sec-macros b { margin-left: 26px; }
.plusc { margin-left: auto; margin-right: 17px; color: #c8c8c8; }
.sec-body { height: 212px; flex: none; background: #1a1a1a; border-bottom: 4px solid #151515; }
.sec-body-fn { height: 56px; }
.list-row { display: flex; align-items: center; height: 52px; gap: 8px; color: #c0c0c0; font-size: 27px; }
.list-parent { padding-left: 8px; gap: 9px; }
.list-child { padding-left: 59px; }
.list-fn { padding-left: 38px; }
.sec-rest { flex: 1; background: #1a1a1a; }

/* viewport */
.viewport { position: relative; height: 1309px; flex: none; background: #252525; }
.vp-toolbar { display: flex; align-items: flex-start; height: 60px; padding: 7px 20px 0 13px; gap: 18px; }
.pill { display: flex; align-items: center; justify-content: center; height: 46px; background: #383838; border: 2px solid #181818; border-radius: 23px; color: #c0c0c0; }
.pill-menu { width: 44px; }
.pill-persp { width: 168px; font-size: 26px; }
.pill-lit { width: 58px; font-size: 26px; }
.vp-right { display: flex; gap: 14px; margin-left: auto; }
.pill-ico { width: 46px; background: #2c2c2c; }
.pill-ico2 { width: 44px; }
.pill-group { display: flex; height: 46px; background: #383838; border: 2px solid #181818; border-radius: 23px; overflow: hidden; }
.pg-cell { display: flex; align-items: center; justify-content: center; flex: 1; border-right: 2px solid #222; font-size: 25px; }
.pg-cell:last-child { border-right: 0; }
.pg-on { background: #0b60c2; }
.pg-mode { width: 196px; }
.pg-grid { width: 95px; }
.pg-angle { width: 122px; }
.pg-scale { width: 106px; }
.pg-cam { width: 74px; margin-left: 10px; }
.annot-label { position: absolute; left: 787px; top: 265px; color: #00ee00; font: 62px/74px "Liberation Sans", Arial, sans-serif; white-space: nowrap; }
.platform { position: absolute; left: 476px; top: 480px; }
.pf-lines path { fill: none; stroke: #c2c6c7; stroke-width: 2.4; stroke-opacity: .9; vector-effect: non-scaling-stroke; }
.pf-ticks { fill: none; stroke: #c8cbcc; stroke-width: 1.6; vector-effect: non-scaling-stroke; }

/* bottom middle */
.tabstrip-find { height: 61px; padding-top: 11px; }
.tab-find { width: 303px; margin-left: 340px; height: 49px; padding-left: 40px; gap: 0; }
.tab-find .close { margin-right: 28px; }
.find-bar { height: 72px; flex: none; padding: 18px 0 0 0; background: #242424; }
.find-input { width: 1000px; height: 42px; margin-left: 330px; padding: 6px 0 0 128px; background: #0f0f0f; color: #666; font-size: 26px; }
.find-list { flex: 1; background: #1a1a1a; }
.find-foot { height: 36px; flex: none; background: #252525; }

/* right column */
.det-hidden { height: 1102px; flex: none; }
.drow { display: grid; grid-template-columns: 325px 444px 1fr; align-items: center; height: 54px; flex: none; padding-top: 2px; border-bottom: 3px solid #1a1a1a; font-size: 21.5px; }
.dlabel { padding-left: 44px; color: #c0c0c0; }
.dlabel-off { color: #666; }
.dval { display: flex; align-items: center; height: 100%; padding-left: 26px; border-left: 2px solid #1a1a1a; border-right: 2px solid #1a1a1a; }
.sbox { display: flex; align-items: center; justify-content: center; width: 34px; height: 34px; background: #0f0f0f; border: 2px solid #2a2a2a; border-radius: 4px; color: #0a4180; }
.sinput-off { width: 248px; height: 38px; background: #1c1c1c; border: 2px solid #2a2a2a; border-radius: 5px; }
.drow-title .dlabel { align-self: start; padding-top: 3px; font-weight: 700; color: #c8c8c8; }
.flags { display: grid; grid-template-columns: 44px 725px 77px; height: 220px; flex: none; }
.flags-list { grid-column: 2; display: flex; flex-direction: column; padding-top: 2px; background: #1a1a1a; }
.flag { display: flex; align-items: center; justify-content: space-between; height: 36px; padding-right: 7px; font-size: 21.5px; color: #b8b8b8; }
.flag span { margin-bottom: 10px; }
.dhead { display: flex; align-items: center; height: 52px; flex: none; padding-left: 44px; background: #2f2f2f; font-size: 21.5px; color: #c8c8c8; }
.drow-vec { height: 55px; }
.dval-vec { gap: 9px; }
.vecin { display: flex; align-items: center; width: 131px; height: 37px; padding-left: 17px; background: #0f0f0f; border: 2px solid #2a2a2a; border-radius: 5px; color: #d0d0d0; }

/* status bar */
.statusbar { display: flex; height: 64px; flex: none; background: #242424; }
.st { display: flex; align-items: center; height: 100%; border-right: 4px solid #171717; font-size: 27px; color: #c0c0c0; }
.st-drawer { width: 271px; padding-left: 22px; gap: 8px; }
.st-log { width: 218px; padding-left: 25px; gap: 11px; }
.st-cmd { width: 736px; padding-left: 28px; gap: 8px; }
.st-cmd > svg:nth-of-type(2) { margin-left: 5px; }
.console { display: flex; align-items: center; width: 530px; height: 42px; margin-left: 22px; padding-left: 16px; background: #0f0f0f; border: 2px solid #333; border-radius: 8px; color: #555; font: 23px "DejaVu Sans Mono", monospace; }
.st-right { position: relative; flex: 1; justify-content: flex-end; gap: 17px; padding-right: 37px; border-right: 0; }
.st-item { display: flex; align-items: center; gap: 11px; }
.st-sep { width: 2px; height: 32px; background: #171717; }
.st-corner { position: absolute; right: 22px; bottom: 16px; }

/* callout: details */
.ov-details { position: absolute; left: 2687px; top: 274px; width: 1153px; height: 1105px; padding: 0 13px 0 9px; background: #151515; overflow: hidden; }
.ovd-main { height: 100%; background: #242424; font-size: 28px; }
.ovd-search { display: flex; align-items: center; height: 91px; padding: 0 0 14px 23px; }
.searchbox-det { width: 955px; height: 60px; gap: 20px; padding-left: 11px; border-radius: 30px; font-size: 36px; }
.ovd-table { margin-left: 37px; }
.ovd-gear { margin-left: 26px; }
.ovd-head { display: flex; align-items: center; height: 69px; padding: 0 0 0 15px; gap: 19px; background: #2f2f2f; color: #c8c8c8; }
.ovd-head b { font-weight: 500; }
.prow { display: grid; grid-template-columns: 434px 593px 1fr; align-items: center; height: 72.25px; border-top: 3px solid #1a1a1a; color: #c0c0c0; }
.prow > span:first-child { padding-left: 60px; }
.pval { display: flex; align-items: center; height: 100%; padding-left: 34px; border-left: 2px solid #1a1a1a; border-right: 2px solid #1a1a1a; }
.pinput { display: flex; align-items: center; height: 52px; padding: 0 0 3px 21px; background: #0f0f0f; border: 2px solid #2c2c2c; border-radius: 7px; color: #c8c8c8; }
.pinput-m { width: 330px; }
.pinput-type { height: 60px; padding: 0 0 0 22px; }
.pinput-l { width: 552px; padding-left: 22px; }
.pinput-s { width: 153px; }
.pinput-none { width: 331px; height: 56px; font-size: 35px; }
.pin { display: block; width: 33px; height: 17px; border-radius: 9px; background: #ffc420; margin-right: 16px; }
.pin-after { margin: 0 0 0 13px; }
.chev-r { margin-left: auto; margin-right: 34px; }
.chev-after { margin-left: 13px; color: #bbb; }
.cbox { display: flex; align-items: center; justify-content: center; width: 45px; height: 47px; background: #0f0f0f; border: 2px solid #2c2c2c; border-radius: 6px; color: #0d6edf; }
.combo { display: flex; align-items: center; gap: 29px; width: 395px; height: 58px; padding-left: 21px; background: #0f0f0f; border: 2px solid #2c2c2c; border-radius: 7px; }
.combo-in { display: flex; align-items: center; width: 271px; height: 50px; padding: 0 0 4px 20px; background: #131313; border: 2px solid #2c2c2c; border-radius: 7px; color: #c8c8c8; }
.dots { width: 26px; text-align: center; font-size: 22px; color: #888; position: relative; top: -3px; }

/* callout: my blueprint */
.ov-bp { position: absolute; left: 0; top: 1417px; width: 1358px; height: 526px; padding: 11px 15px 0 8px; background: #151515; }
.ovb-head { display: flex; align-items: center; height: 87px; padding-left: 59px; background: #2f2f2f; color: #c8c8c8; font-size: 32px; }
.ovb-head b { font-weight: 700; }
.ovb-head-var { padding-left: 19px; gap: 8px; }
.ovb-tri-h, .ovb-cat svg { color: #7c7c7c; }
.ovb-plus { margin-left: auto; margin-right: 28px; color: #c8c8c8; }
.ovb-group { height: 182px; background: #1a1a1a; }
.ovb-cat { display: flex; align-items: center; height: 56px; padding-left: 8px; gap: 9px; font-size: 37px; color: #c8c8c8; }
.ovb-cat b { font-weight: 700; }
.ovb-cat-sel { height: 56px; background: #2a3541; }
.ovb-var { display: flex; align-items: center; height: 62px; padding-left: 90px; font-size: 42.5px; color: #c8c8c8; }
.ovb-name { width: 713px; }
.vpin { display: block; width: 37px; height: 19px; border-radius: 10px; }
.vpin-b { background: #00a8f4; margin-left: 27px; }
.vpin-y { background: #ffc420; }
.ovb-var-sel { height: 81px; background: #3f566f; color: #fff; }
.ovb-type { margin-left: 20px; }
.ovb-eye { margin-left: auto; margin-right: 11px; }
.ovb-gap { height: 6px; background: #1a1a1a; }

/* callout: tooltip */
.ov-tip { position: absolute; left: 1722px; top: 1626px; width: 1376px; height: 454px; background: #1a1a1a; overflow: hidden; }
.ovt-head { display: flex; align-items: center; height: 100px; padding: 12px 0 0 14px; gap: 13px; color: #c8c8c8; font-size: 57.5px; }
.ovt-head svg { color: #6e6e6e; }
.ovt-head b { font-weight: 700; }
.ovt-row { display: flex; height: 125px; padding-left: 140px; background: #242424; color: #c0c0c0; font-size: 65px; }
.ovt-name { margin-top: 30px; width: 461px; white-space: nowrap; }
.ovt-type { display: flex; align-items: center; gap: 29px; width: 441px; height: 100px; margin: 11px 0 0 306px; padding-left: 44px; background: #0f0f0f; border: 5px solid #2e2e2e; border-radius: 22px; color: #c0c0c0; font-size: 62px; }
.ovt-pin { display: block; width: 56px; height: 34px; border-radius: 12px; background: #ffc420; margin-top: 16px; }
.tooltip { position: absolute; left: 418px; top: 174px; width: 918px; height: 239px; display: flex; flex-direction: column; align-items: center; padding-top: 43px; background: #f0f0f0; box-shadow: 0 -9px 0 #2f2f2f, 7px 0 0 #111, inset 0 3px 3px #999, inset 0 -3px 3px #999; }
.tooltip::after { content: ""; position: absolute; left: 0; top: 239px; width: 927px; height: 8px; background: linear-gradient(90deg, #000 482px, transparent 482px, transparent 802px, #000 802px); }
.tooltip-main { color: #111; font-size: 58px; line-height: 68px; white-space: nowrap; }
.tooltip-sub { margin-top: 24px; color: #777; font-size: 50px; line-height: 60px; white-space: nowrap; }

/* annotations */
.annot { position: absolute; left: 0; top: 0; pointer-events: none; }
.annot rect, .annot path { fill: none; stroke: #00fa00; stroke-width: 10; }
.annot-head { fill: #00fa00; }
```
